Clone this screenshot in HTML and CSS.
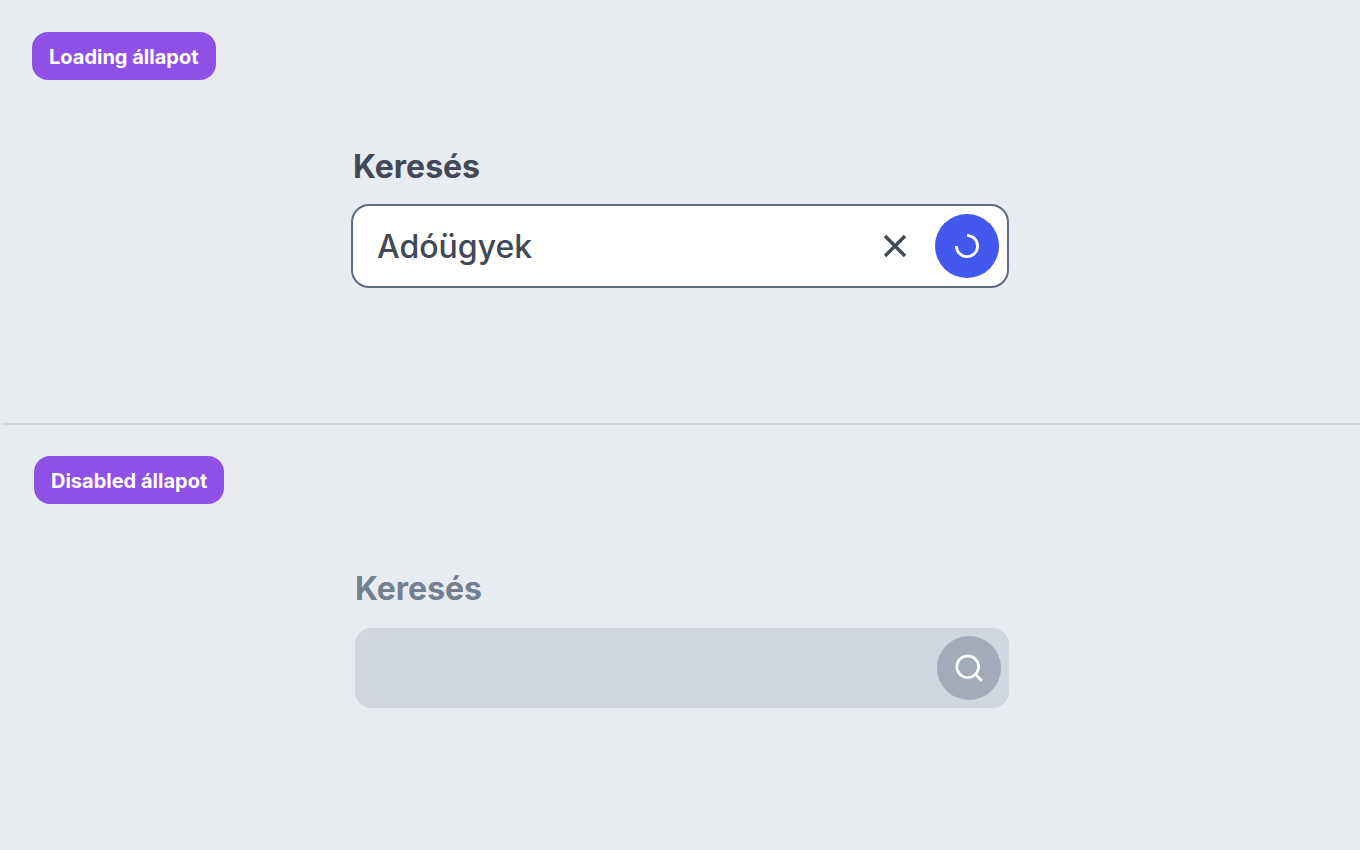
FILE: index.html
```html
<!DOCTYPE html>
<html lang="hu">

<head>
    <meta charset="UTF-8">
    <meta name="viewport" content="width=device-width, initial-scale=1">
    <title>Keresés</title>
    <link rel="stylesheet" href="styles.css">
</head>

<body>
    <!-- Loading -->
    <section class="state">
        <span class="badge">Loading állapot</span>
        <form class="search">
            <label class="search-label" for="search-loading">Keresés</label>
            <div class="search-box">
                <input class="search-input" type="text" id="search-loading" value="Adóügyek">
                <button class="clear-button" type="reset" aria-label="Törlés">
                    <svg width="32" height="32" viewBox="0 0 32 32" fill="none" stroke="currentColor"
                        stroke-width="3.4">
                        <path d="M6 6L26 26M26 6L6 26"></path>
                    </svg>
                </button>
                <button class="search-button" type="submit" aria-label="Betöltés">
                    <svg width="32" height="32" viewBox="0 0 32 32" fill="none" stroke="currentColor"
                        stroke-width="2.8">
                        <path d="M16 5.4A10.6 10.6 0 1 1 5.4 16"></path>
                    </svg>
                </button>
            </div>
        </form>
    </section>

    <!-- Disabled -->
    <section class="state state-disabled">
        <span class="badge">Disabled állapot</span>
        <form class="search">
            <label class="search-label" for="search-disabled">Keresés</label>
            <div class="search-box">
                <input class="search-input" type="text" id="search-disabled" disabled>
                <button class="search-button" type="submit" aria-label="Keresés" disabled>
                    <svg width="32" height="32" viewBox="0 0 32 32" fill="none" stroke="currentColor"
                        stroke-width="2.7">
                        <circle cx="14.7" cy="14.7" r="10.9"></circle>
                        <path d="M22.4 22.4L28.8 28.8"></path>
                    </svg>
                </button>
            </div>
        </form>
    </section>
</body>

</html>
```
FILE: styles.css
```css
* {
    box-sizing: border-box;
}

body {
    margin: 0;
    font-family: "Inter", sans-serif;
    background-color: #e8ecf1;
    color: #414856;
}

.state {
    min-height: 423px;
    padding: 32px;
}

.state-disabled {
    margin-left: 2px;
    padding: 31px 30px 32px 32px;
    border-top: 2px solid #d0d7df;
}

.badge {
    display: block;
    width: fit-content;
    padding: 11px 17px 9px;
    border-radius: 16px;
    background-color: #8f50e6;
    color: #fff;
    font-size: 20px;
    font-weight: 700;
    line-height: 28px;
}

.search {
    max-width: 654px;
    margin: 66px auto 0;
}

.state-disabled .search {
    margin-top: 64px;
}

.search-label {
    display: block;
    margin-bottom: 18px;
    font-size: 32px;
    font-weight: 700;
    line-height: 42px;
}

.search-box {
    display: flex;
    align-items: center;
    height: 80px;
    padding: 8px 8px 8px 24px;
    border-radius: 16px;
    background-color: #fff;
    box-shadow: 0 0 0 2px #606b7d;
}

.search-input {
    flex: 1;
    min-width: 0;
    height: 64px;
    padding: 0;
    border: none;
    outline: none;
    background: transparent;
    color: inherit;
    font-family: inherit;
    font-size: 32px;
    font-weight: 500;
}

.clear-button,
.search-button {
    display: flex;
    flex-shrink: 0;
    align-items: center;
    justify-content: center;
    padding: 0;
    border: none;
    cursor: pointer;
}

.clear-button {
    width: 32px;
    height: 32px;
    margin-right: 24px;
    background: transparent;
    color: inherit;
}

.search-button {
    width: 64px;
    height: 64px;
    border-radius: 50%;
    background-color: #4358ed;
    color: #fff;
}

/* Disabled field */
.state-disabled .search-label {
    color: #747f90;
}

.state-disabled .search-box {
    background-color: #d0d7df;
    box-shadow: none;
}

.search-button:disabled {
    background-color: #a3abb9;
    cursor: default;
}
```
